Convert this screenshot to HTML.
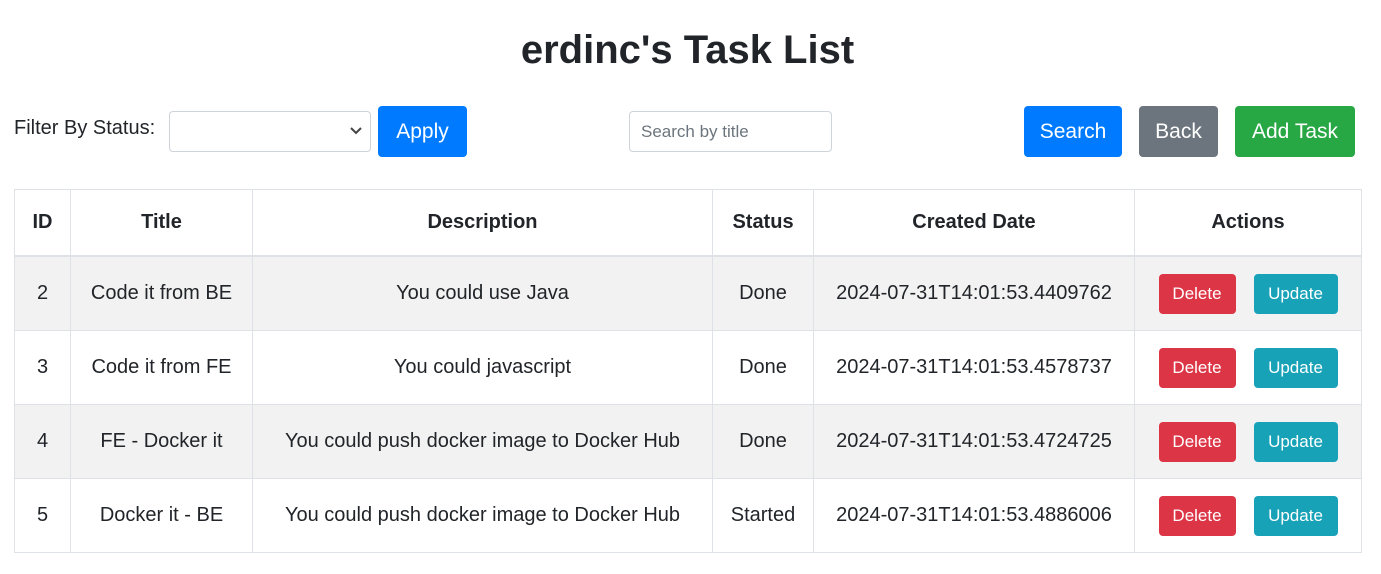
<!DOCTYPE html>
<html><head><style>
body{margin:0;width:1381px;height:574px;background:#fff;font-family:"Liberation Sans",sans-serif;color:#212529;position:relative;overflow:hidden}
.a{position:absolute}
h1{position:absolute;left:0;width:1375px;top:25px;margin:0;text-align:center;font-size:40px;font-weight:bold;line-height:50px}
.btn{position:absolute;color:#fff;border-radius:4px;display:flex;align-items:center;justify-content:center;font-size:21px}
table{position:absolute;left:14px;top:189px;border-collapse:collapse;width:1347px;table-layout:fixed}
td,th{border:1px solid #dee2e6;text-align:center;font-size:20px;padding:0}
th{height:65px;font-weight:bold;border-bottom:2px solid #dee2e6}
td{height:73px}
tr.s td{background:#f2f2f2}
.d,.u{display:inline-block;color:#fff;border-radius:4px;font-size:17px;height:40px;line-height:40px;vertical-align:middle}
.d{background:#dc3545;width:77px;margin-right:18px}
.u{background:#17a2b8;width:84px}
</style></head><body>
<h1>erdinc's Task List</h1>
<div class="a" style="left:14px;top:117px;font-size:20px">Filter By Status:</div>
<div class="a" style="left:169px;top:111px;width:200px;height:39px;border:1px solid #ced4da;border-radius:4px"><svg style="position:absolute;right:8px;top:15px" width="12" height="8"><path d="M1 1l5 5 5-5" stroke="#444" stroke-width="2" fill="none"/></svg></div>
<div class="btn" style="left:378px;top:106px;width:89px;height:51px;background:#007bff">Apply</div>
<div class="a" style="left:629px;top:111px;font-size:17px;color:#6c757d;line-height:39px;padding-left:11px;box-sizing:border-box;width:203px;height:41px;border:1px solid #ced4da;border-radius:4px">Search by title</div>
<div class="btn" style="left:1024px;top:106px;width:98px;height:51px;background:#007bff">Search</div>
<div class="btn" style="left:1139px;top:106px;width:79px;height:51px;background:#6c757d">Back</div>
<div class="btn" style="left:1235px;top:106px;width:120px;height:51px;background:#28a745">Add Task</div>
<table>
<colgroup><col style="width:56px"><col style="width:182px"><col style="width:460px"><col style="width:101px"><col style="width:321px"><col style="width:227px"></colgroup>
<tr><th>ID</th><th>Title</th><th>Description</th><th>Status</th><th>Created Date</th><th>Actions</th></tr>
<tr class="s"><td>2</td><td>Code it from BE</td><td>You could use Java</td><td>Done</td><td>2024-07-31T14:01:53.4409762</td><td><span class="d">Delete</span><span class="u">Update</span></td></tr>
<tr><td>3</td><td>Code it from FE</td><td>You could javascript</td><td>Done</td><td>2024-07-31T14:01:53.4578737</td><td><span class="d">Delete</span><span class="u">Update</span></td></tr>
<tr class="s"><td>4</td><td>FE - Docker it</td><td>You could push docker image to Docker Hub</td><td>Done</td><td>2024-07-31T14:01:53.4724725</td><td><span class="d">Delete</span><span class="u">Update</span></td></tr>
<tr><td>5</td><td>Docker it - BE</td><td>You could push docker image to Docker Hub</td><td>Started</td><td>2024-07-31T14:01:53.4886006</td><td><span class="d">Delete</span><span class="u">Update</span></td></tr>
</table>
</body></html>
